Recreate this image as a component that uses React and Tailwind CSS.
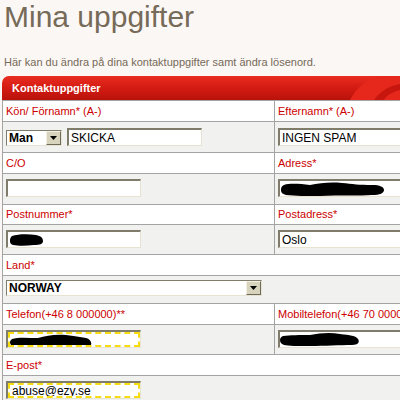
import React from 'react';

const FONT = { fontFamily: '"Liberation Sans", Arial, sans-serif' };

function Blot({ w, h, d }) {
  return (
    <svg width={w} height={h} viewBox={`0 0 ${w} ${h}`} className="absolute left-0 top-0">
      <path d={d} fill="#000" />
    </svg>
  );
}

function TextInput({ value, focus, blot, width = 'w-[135px]' }) {
  return (
    <div
      className={`relative h-[18px] ${width} bg-white border-t-2 border-l-2 border-b border-r border-t-[#7f7c6c] border-l-[#7f7c6c] border-b-[#e6e3d3] border-r-[#e6e3d3]`}
    >
      <div
        className={`relative h-full w-full flex items-center pl-[2px] text-[12px] text-black leading-none overflow-hidden ${
          focus ? 'border-2 border-dashed border-[#f7dc12]' : ''
        }`}
      >
        {value}
        {blot}
      </div>
    </div>
  );
}

function Select({ value, width }) {
  return (
    <div
      className={`flex items-center h-[16px] ${width} bg-white border-t border-l border-[#7f7c6c] border-b border-r border-b-[#e6e3d3] border-r-[#e6e3d3]`}
    >
      <span className="flex-1 pl-[2px] text-[12px] font-bold leading-none text-black">{value}</span>
      <span className="flex items-center justify-center h-[14px] w-[15px] bg-[#d8d3bd] border border-t-[#f4f1e4] border-l-[#f4f1e4] border-b-[#6e6a5a] border-r-[#6e6a5a]">
        <svg width="7" height="4" viewBox="0 0 7 4">
          <path d="M0 0h7L3.5 4z" fill="#000" />
        </svg>
      </span>
    </div>
  );
}

function Label({ children, h = 'h-[20px]' }) {
  return (
    <div className={`flex items-center pl-[3px] ${h} text-[11px] leading-[13px] text-[#cc0000] whitespace-nowrap`}>
      {children}
    </div>
  );
}

function Row({ left, right, bg, h }) {
  return (
    <div className={`flex border-b border-[#a4a4a4] ${bg} ${h}`}>
      <div className="w-[272px] shrink-0 border-r border-[#a4a4a4]">{left}</div>
      <div className="flex-1 min-w-0 overflow-hidden">{right}</div>
    </div>
  );
}

function InputCell({ children, pt = 'pt-[5px]' }) {
  return <div className={`flex items-start gap-[5px] pl-[3px] ${pt} whitespace-nowrap`}>{children}</div>;
}

export default function App() {
  return (
    <div className="w-[400px] h-[400px] overflow-hidden bg-[#fbf7f5]" style={FONT}>
      <h1 className="pl-[4px] text-[30px] leading-[34px] text-[#766a58] whitespace-nowrap">Mina uppgifter</h1>
      <p className="mt-[22px] pl-[4px] text-[11px] leading-[13px] text-[#766a58] whitespace-nowrap">
        Här kan du ändra på dina kontaktuppgifter samt ändra lösenord.
      </p>

      <div className="ml-[2px] mt-[7px] w-[420px]">
        <div className="relative h-[24px] rounded-tl-[7px] bg-gradient-to-b from-[#e92c20] via-[#d41b12] to-[#b8120b] flex items-center pl-[10px] overflow-hidden">
          <span className="text-[11px] leading-[13px] font-bold text-white">Kontaktuppgifter</span>
          <svg width="70" height="24" viewBox="0 0 70 24" className="absolute left-[328px] top-0">
            <path d="M20 24C26 12 36 3 50 0H70V24Z" fill="#e6271c" />
            <path d="M44 24C50 16 58 10 70 8V14C62 16 56 20 54 24Z" fill="#c6160e" />
          </svg>
        </div>

        <div className="border-t border-l border-[#a4a4a4]">
          <Row
            bg="bg-white"
            h="h-[21px]"
            left={<Label>Kön/ Förnamn* (A-)</Label>}
            right={<Label>Efternamn* (A-)</Label>}
          />
          <Row
            bg="bg-[#f1f2ef]"
            h="h-[31px]"
            left={
              <InputCell pt="pt-[6px]">
                <div className="pt-[2px]">
                  <Select value="Man" width="w-[56px]" />
                </div>
                <TextInput value="SKICKA" />
              </InputCell>
            }
            right={
              <InputCell pt="pt-[6px]">
                <TextInput value="INGEN SPAM" />
              </InputCell>
            }
          />
          <Row
            bg="bg-white"
            h="h-[21px]"
            left={<Label>C/O</Label>}
            right={<Label>Adress*</Label>}
          />
          <Row
            bg="bg-[#f1f2ef]"
            h="h-[31px]"
            left={
              <InputCell>
                <TextInput value="" />
              </InputCell>
            }
            right={
              <InputCell>
                <TextInput
                  value=""
                  blot={
                    <Blot
                      w={110}
                      h={16}
                      d="M4 4C10 2 20 3 30 4C40 2 50 1 62 2C72 3 80 4 92 4C100 4 104 6 104 9C104 12 100 14 92 14C80 15 60 14 40 15C28 15 14 15 6 14C2 13 1 11 1 9C1 6 2 5 4 4Z"
                    />
                  }
                />
              </InputCell>
            }
          />
          <Row
            bg="bg-white"
            h="h-[20px]"
            left={<Label h="h-[19px]">Postnummer*</Label>}
            right={<Label h="h-[19px]">Postadress*</Label>}
          />
          <Row
            bg="bg-[#f1f2ef]"
            h="h-[30px]"
            left={
              <InputCell>
                <TextInput
                  value=""
                  blot={
                    <Blot
                      w={40}
                      h={16}
                      d="M4 4C10 2 20 2 28 3C33 4 35 6 35 9C35 12 32 13 26 13C18 14 10 14 5 13C2 12 2 10 2 8C2 6 3 5 4 4Z"
                    />
                  }
                />
              </InputCell>
            }
            right={
              <InputCell>
                <TextInput value="Oslo" />
              </InputCell>
            }
          />
          <div className="flex items-center h-[21px] bg-white border-b border-[#a4a4a4]">
            <Label>Land*</Label>
          </div>
          <div className="h-[28px] bg-[#f1f2ef] border-b border-[#a4a4a4] pl-[3px] pt-[4px]">
            <Select value="NORWAY" width="w-[256px]" />
          </div>
          <Row
            bg="bg-white"
            h="h-[21px]"
            left={<Label>Telefon(+46 8 000000)**</Label>}
            right={<Label>Mobiltelefon(+46 70 000000)</Label>}
          />
          <Row
            bg="bg-[#f1f2ef]"
            h="h-[30px]"
            left={
              <InputCell>
                <TextInput
                  focus
                  value=""
                  blot={
                    <Blot
                      w={90}
                      h={16}
                      d="M2 5C8 3 18 4 28 4C36 2 44 0 56 1C64 2 70 3 76 4C80 5 82 8 81 11C80 14 76 15 72 13C62 12 50 12 36 13C24 14 12 14 5 13C1 12 0 10 0 8C0 7 1 6 2 5Z"
                    />
                  }
                />
              </InputCell>
            }
            right={
              <InputCell>
                <TextInput
                  value=""
                  blot={
                    <Blot
                      w={90}
                      h={16}
                      d="M3 4C10 3 20 3 30 3C40 1 50 0 60 2C70 3 76 4 78 7C80 10 78 13 72 13C60 13 44 14 30 14C18 14 8 14 4 13C1 12 0 10 0 8C0 6 1 5 3 4Z"
                    />
                  }
                />
              </InputCell>
            }
          />
          <div className="flex items-center h-[21px] bg-white border-b border-[#a4a4a4]">
            <Label>E-post*</Label>
          </div>
          <div className="h-[40px] bg-[#f1f2ef] pl-[3px] pt-[5px]">
            <TextInput focus value="abuse@ezy.se" />
          </div>
        </div>
      </div>
    </div>
  );
}
